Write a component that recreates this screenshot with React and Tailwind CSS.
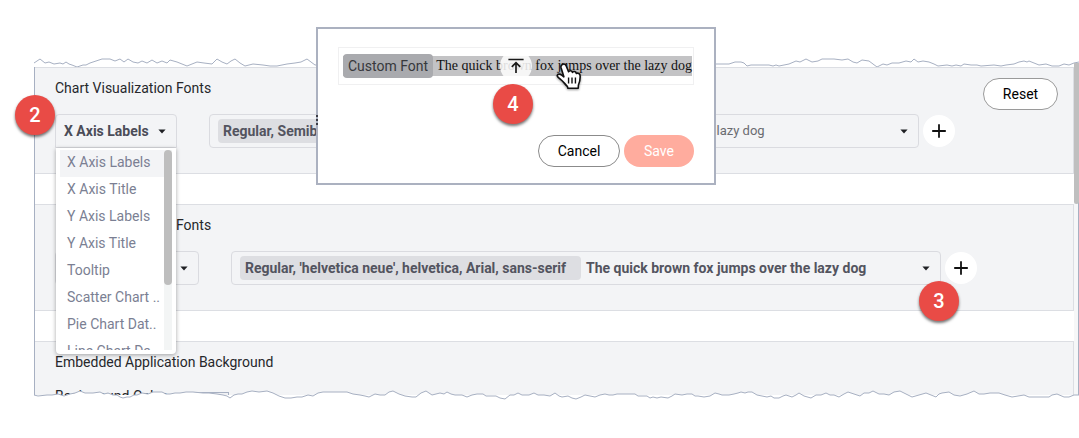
import React from "react";

const TOP_EDGE =
  "0,5 6,1 11,5 15,4 20,6 26,5 29,6 32,4 35,6 38,7 43,9 49,7 52,7 56,5 62,3 68,1 76,1 81,3 86,1 90,4 94,1 99,4 104,5 108,3 113,5 118,2 123,5 128,3 133,5 136,2 143,4 148,6 153,8 158,6 163,4 170,5 178,6 183,1 188,4 193,6 197,3 201,1 206,5 211,8 219,6 229,7 236,8 243,8 253,6 261,5 267,4 273,1 277,4 281,7 320,5 380,3 430,6 500,2 560,6 620,4 680,6 695,6 701,4 707,4 710,5 713,8 717,7 735,7 739,8 742,7 745,8 750,7 755,6 762,3 766,4 772,1 778,4 784,3 788,1 800,1 808,2 814,1 819,4 823,5 828,2 835,3 839,6 843,9 849,6 853,7 858,5 865,5 872,3 877,4 880,1 884,4 889,3 895,4 900,6 904,8 913,7 918,8 922,7 927,8 930,6 937,7 943,7 947,8 960,7 967,8 972,7 980,6 985,4 990,3 993,4 995,3 1000,5 1005,7 1012,6 1018,8 1025,8 1030,6 1035,7 1040,5 1045,4";

const BOTTOM_EDGE =
  "0,5 4,6 13,5 18,5 24,4 30,6 36,4 41,3 46,1 51,3 59,3 66,2 70,4 74,3 79,5 83,5 86,7 89,8 93,7 96,7 100,5 103,5 108,3 114,4 119,2 128,2 132,4 136,4 141,3 146,3 152,2 159,2 169,3 175,3 183,4 189,5 193,6 196,8 200,5 204,4 208,4 213,2 218,1 225,2 233,1 239,3 245,6 251,8 257,8 263,7 268,7 274,5 279,6 284,3 289,2 300,2 313,2 319,4 326,5 331,6 335,7 341,4 346,5 351,5 355,2 359,1 365,4 371,6 378,7 382,7 387,3 392,1 398,5 402,4 406,3 410,4 413,2 417,4 421,5 428,5 433,7 438,5 443,4 449,4 452,6 456,6 462,6 466,8 471,9 476,5 480,5 484,3 488,5 491,5 495,5 500,3 504,5 510,5 516,6 521,3 525,6 528,7 534,6 538,8 542,9 547,7 551,5 556,6 561,7 566,5 571,4 575,5 579,5 583,4 590,4 596,4 601,4 604,6 613,6 616,8 619,7 623,8 627,7 634,8 638,6 641,4 648,5 653,4 658,4 661,6 664,6 670,7 676,6 681,3 685,4 688,5 691,5 695,5 700,4 704,3 707,2 711,3 714,2 718,2 723,5 728,6 733,7 737,6 740,8 745,8 749,6 752,5 758,7 762,5 765,3 770,6 777,8 782,5 787,5 792,3 796,5 800,5 805,7 810,4 814,2 820,4 826,6 830,3 835,3 839,1 845,4 850,4 855,5 860,2 866,1 872,4 878,7 885,5 892,3 897,5 902,7 905,4 908,3 915,2 920,5 926,6 933,4 940,1 945,4 950,4 956,3 965,3 971,5 978,7 984,6 990,5 995,7 1002,7 1009,7 1015,7 1018,5 1023,4 1030,7 1035,7 1040,5 1045,5";

const MENU_ITEMS = [
  "X Axis Labels",
  "X Axis Title",
  "Y Axis Labels",
  "Y Axis Title",
  "Tooltip",
  "Scatter Chart ..",
  "Pie Chart Dat..",
  "Line Chart Da..",
];

function TornEdge({ side }) {
  const top = side === "top";
  return (
    <svg
      aria-hidden="true"
      viewBox="0 0 1045 10"
      preserveAspectRatio="none"
      className={
        top
          ? "block h-[10px] w-full"
          : "absolute inset-x-0 bottom-0 z-10 block h-[10px] w-full"
      }
    >
      {!top && <polygon points={`${BOTTOM_EDGE} 1045,10 0,10`} fill="#fff" />}
      <polyline
        points={top ? TOP_EDGE : BOTTOM_EDGE}
        fill="none"
        stroke="#a7b0c2"
        strokeWidth="1"
      />
    </svg>
  );
}

function Caret() {
  return (
    <svg aria-hidden="true" viewBox="0 0 8 5" className="h-[5px] w-2 shrink-0">
      <path d="M0.4 0.4h7.2L4 4.6z" fill="#1f2024" />
    </svg>
  );
}

function AddButton({ label }) {
  return (
    <button
      type="button"
      aria-label={label}
      className="ml-1 flex size-8 shrink-0 items-center justify-center rounded-full bg-white"
    >
      <svg aria-hidden="true" viewBox="0 0 14 14" className="size-[14px]">
        <path d="M7 0.2v13.6M0.2 7h13.6" stroke="#111" strokeWidth="1.8" />
      </svg>
    </button>
  );
}

function FontPicker({ chip, chipClass, sample, sampleClass }) {
  return (
    <button
      type="button"
      aria-haspopup="listbox"
      className="ml-8 flex h-[34px] max-w-[710px] flex-1 items-center rounded border border-[#dadbe0] pl-2 pr-2.5 text-left text-sm whitespace-nowrap"
    >
      <span
        className={`flex h-6 items-center rounded-sm bg-[#dddee2] px-[5px] font-bold text-[#53545f] ${chipClass}`}
      >
        {chip}
      </span>
      <span className={`ml-[5px] flex-1 ${sampleClass}`}>{sample}</span>
      <Caret />
    </button>
  );
}

function Section({ title, aside, children }) {
  return (
    <section className="flex items-start border-y border-r border-[#dcdee3] bg-[#f3f4f6] pt-[10px] pr-[15px] pb-[25px] pl-5">
      <div className="min-w-0 flex-1">
        <h2 className="text-sm leading-5 text-[#26272b]">{title}</h2>
        <div className="mt-4 flex items-center">{children}</div>
      </div>
      {aside}
    </section>
  );
}

function Badge({ n, className }) {
  return (
    <span
      className={`absolute z-30 flex size-10 items-center justify-center rounded-full bg-[#e94b46] text-xl font-medium text-white shadow-[0_2px_3px_rgba(0,0,0,0.55)] ${className}`}
    >
      {n}
    </span>
  );
}

function AxisMenu() {
  return (
    <div className="absolute inset-x-px top-[34px] z-20 rounded-b bg-white px-1 pt-0.5 pb-1 shadow-[0_1px_4px_rgba(0,0,0,0.35)]">
      <div className="flex h-[200px] overflow-hidden">
        <ul role="listbox" aria-label="Chart element" className="flex-1">
          {MENU_ITEMS.map((item, i) => (
            <li
              key={item}
              role="option"
              aria-selected={i === 0}
              className={`h-[27px] pl-[7px] text-sm leading-6 whitespace-nowrap text-[#7b7f93] ${
                i === 0 ? "bg-[#f3f4f6]" : ""
              }`}
            >
              {item}
            </li>
          ))}
        </ul>
        <div className="w-2 bg-[#f3f5f5]">
          <div className="h-[135px] rounded-full bg-[#bebebe]" />
        </div>
      </div>
    </div>
  );
}

function HandCursor() {
  return (
    <svg
      aria-hidden="true"
      viewBox="0 0 26 28"
      className="absolute top-[13px] left-[216px] z-10 h-[30px] w-7 drop-shadow-[0_1px_1px_rgba(0,0,0,0.4)]"
    >
      <path
        d="M7 3.2C8.4 2.4 9.8 3 10.4 4.6L12.6 10C13 8.8 15.6 8.6 16.2 10.6C17.2 9.2 19.4 9.6 19.8 11.6C21.4 10.8 23.4 11.8 23.4 14C23.6 17.6 23.2 19.4 21.8 22.4L21.6 25.4H12L11.4 23.6C9 21.4 7.6 19 5.4 17.4C3.6 16 1.8 14.8 2 13.4C2.4 11.8 4.8 12 6.2 13.2L8.2 14.8L5.6 6.2C5.2 4.6 5.8 3.6 7 3.2Z"
        fill="#fff"
        stroke="#111"
        strokeWidth="1.5"
        strokeLinejoin="round"
      />
      <path d="M12.6 15.4v5.6M15.8 15.4v5.6M19 15.4v5.6" stroke="#111" strokeWidth="1.3" />
    </svg>
  );
}

function CustomFontDialog() {
  return (
    <div
      role="dialog"
      aria-label="Custom font"
      className="absolute top-[27px] left-[316px] z-40 w-[400px] border-2 border-[#abb1c0] bg-white px-5 pt-[18px] pb-4"
    >
      <svg
        aria-hidden="true"
        viewBox="0 0 2 12"
        className="absolute top-[86px] left-[-2px] h-3 w-0.5"
      >
        <path d="M0 1h2M0 5h2M0 9h2" stroke="#3c3d45" strokeWidth="2" />
      </svg>
      <div className="relative flex h-[38px] items-center border border-[#f0f0f1] px-1">
        <div className="flex h-5 flex-1 items-center bg-[#c3c3c5] whitespace-nowrap">
          <span className="flex h-6 items-center rounded-sm bg-[#a9aaae] px-[5px] text-sm text-[#37383c]">
            Custom Font
          </span>
          <span className="ml-[3px] font-['Liberation_Serif',serif] text-sm text-[#111]">
            The quick brown fox jumps over the lazy dog
          </span>
        </div>
        <button
          type="button"
          aria-label="Upload font"
          className="absolute top-[2px] left-[161px] flex size-8 items-center justify-center rounded-full bg-white/85"
        >
          <svg aria-hidden="true" viewBox="0 0 16 16" className="size-4">
            <path
              d="M0.4 1.5h15.2M8 15V5M3.8 8.8L8 4.6l4.2 4.2"
              fill="none"
              stroke="#1a1a1a"
              strokeWidth="1.7"
            />
          </svg>
        </button>
        <HandCursor />
      </div>
      <div className="mt-[50px] flex justify-end gap-1 text-sm">
        <button
          type="button"
          className="h-8 w-[82px] rounded-full border border-[#8b8b8b] bg-white text-black"
        >
          Cancel
        </button>
        <button type="button" className="h-8 w-[70px] rounded-full bg-[#ffac9e] text-white">
          Save
        </button>
      </div>
      <Badge n="4" className="top-[55px] left-[175px]" />
    </div>
  );
}

export default function App() {
  return (
    <main className="relative min-h-screen overflow-hidden bg-white pt-[58px] pl-[34px] font-['Roboto',sans-serif]">
      <div className="relative h-[342px]">
        <TornEdge side="top" />
        <div className="absolute top-[9px] right-0 bottom-[5px] left-0 flex border-x border-[#a7b0c2]">
          <div className="flex min-w-0 flex-1 flex-col gap-[30px] overflow-hidden">
            <Section
              title="Chart Visualization Fonts"
              aside={
                <button
                  type="button"
                  className="h-8 w-[75px] rounded-full border border-[#9a9a9a] bg-white text-sm text-black"
                >
                  Reset
                </button>
              }
            >
              <div className="relative w-[122px]">
                <button
                  type="button"
                  aria-haspopup="listbox"
                  aria-expanded="true"
                  className="flex h-[34px] w-full items-center justify-between rounded-t border border-[#dadbe0] pr-[10px] pl-2 text-sm font-bold text-[#4b4c58]"
                >
                  X Axis Labels
                  <Caret />
                </button>
                <AxisMenu />
              </div>
              <FontPicker
                chip="Regular, Semibold, Bold, sans-serif"
                chipClass="w-[285px]"
                sample="The quick brown fox jumps over the lazy dog"
                sampleClass="text-[13px] text-[#6a6b70]"
              />
              <AddButton label="Add chart font" />
            </Section>

            <Section title={<span className="pl-[121px]">Fonts</span>}>
              <button
                type="button"
                aria-haspopup="listbox"
                aria-label="Application font"
                className="flex h-[34px] w-[144px] items-center justify-end rounded border border-[#dadbe0] pr-[10px]"
              >
                <Caret />
              </button>
              <FontPicker
                chip="Regular, 'helvetica neue', helvetica, Arial, sans-serif"
                chipClass="w-[341px]"
                sample="The quick brown fox jumps over the lazy dog"
                sampleClass="font-bold text-[#53545f]"
              />
              <AddButton label="Add application font" />
            </Section>

            <Section title="Embedded Application Background">
              <label htmlFor="bg-color" className="text-sm leading-4 text-[#26272b]">
                Background Color
              </label>
              <button
                id="bg-color"
                type="button"
                className="mt-[3px] ml-[21px] h-3 w-[42px] border border-[#a7b0c2] bg-[#f0f1f4]"
              />
            </Section>
          </div>
          <div className="w-1 bg-[#f6f7f8]" />
        </div>
        <div className="absolute top-[5px] right-0 h-[141px] w-[5px] rounded-b bg-[#bfbfbf]" />
        <TornEdge side="bottom" />
        <Badge n="2" className="top-[37px] left-[-19px]" />
        <Badge n="3" className="top-[223px] left-[885px]" />
      </div>
      <CustomFontDialog />
    </main>
  );
}
